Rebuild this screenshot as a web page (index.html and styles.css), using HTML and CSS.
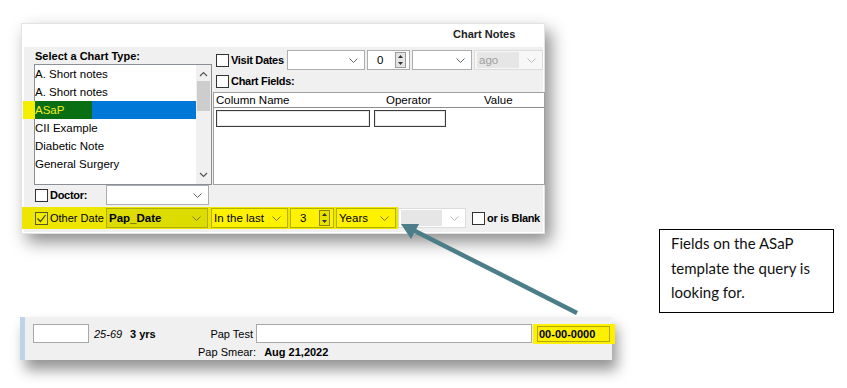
FILE: index.html
```html
<!DOCTYPE html>
<html lang="en">
<head>
  <meta charset="UTF-8" />
  <title>Chart Notes query</title>
  <link rel="stylesheet" href="styles.css">
</head>
<body>
  <div class="page">
    <div class="panel">
      <div class="panel-head">Chart Notes</div>
      <div class="panel-body">
        <div class="left-col">
          <div class="section-label">Select a Chart Type:</div>
          <div class="listbox">
            <ul class="list-items">
              <li>A. Short notes</li>
              <li>A. Short notes</li>
              <li class="selected"><span class="mark">ASaP</span></li>
              <li>CII Example</li>
              <li>Diabetic Note</li>
              <li>General Surgery</li>
            </ul>
            <div class="vscroll">
              <svg width="9" height="6" viewBox="0 0 9 6"><path d="M1 5 L4.5 1.5 L8 5" fill="none" stroke="#555" stroke-width="1.2"/></svg>
              <div class="thumb"></div>
              <svg class="down" width="9" height="6" viewBox="0 0 9 6"><path d="M1 1 L4.5 4.5 L8 1" fill="none" stroke="#555" stroke-width="1.2"/></svg>
            </div>
          </div>
        </div>

        <div class="right-col">
          <div class="visit-row">
            <span class="check"></span>
            <span class="bold-label visit-label">Visit Dates</span>
            <div class="combo w78">
              <span class="combo-text"></span>
              <svg width="9" height="5" viewBox="0 0 9 5"><path d="M0.5 0.5 L4.5 4.5 L8.5 0.5" fill="none" stroke="#666"/></svg>
            </div>
            <div class="spin w43">
              <span class="spin-text">0</span>
              <span class="spin-btns">
                <span class="spin-btn"><svg width="5" height="3" viewBox="0 0 5 3"><path d="M0 3 L2.5 0 L5 3 Z" fill="#333"/></svg></span>
                <span class="spin-btn"><svg width="5" height="3" viewBox="0 0 5 3"><path d="M0 0 L2.5 3 L5 0 Z" fill="#333"/></svg></span>
              </span>
            </div>
            <div class="combo w60">
              <span class="combo-text"></span>
              <svg width="9" height="5" viewBox="0 0 9 5"><path d="M0.5 0.5 L4.5 4.5 L8.5 0.5" fill="none" stroke="#666"/></svg>
            </div>
            <div class="combo disabled w69">
              <span class="combo-text field">ago</span>
              <svg width="9" height="5" viewBox="0 0 9 5"><path d="M0.5 0.5 L4.5 4.5 L8.5 0.5" fill="none" stroke="#bbb"/></svg>
            </div>
          </div>

          <div class="fields-row">
            <span class="check"></span>
            <span class="bold-label">Chart Fields:</span>
          </div>

          <div class="field-grid">
            <div class="grid-head">
              <span class="col-name">Column Name</span>
              <span class="col-op">Operator</span>
              <span class="col-val">Value</span>
            </div>
            <div class="grid-row">
              <span class="cell-input w154"></span>
              <span class="cell-input w72"></span>
            </div>
          </div>
        </div>

        <div class="doctor-row">
          <span class="check"></span>
          <span class="bold-label doctor-label">Doctor:</span>
          <div class="combo w103 white">
            <span class="combo-text"></span>
            <svg width="9" height="5" viewBox="0 0 9 5"><path d="M0.5 0.5 L4.5 4.5 L8.5 0.5" fill="none" stroke="#666"/></svg>
          </div>
        </div>

        <div class="other-row">
          <div class="highlight">
            <span class="check checked">
              <svg width="11" height="11" viewBox="0 0 11 11"><path d="M1.5 5.5 L4.5 8.5 L9.5 2" fill="none" stroke="#3a3a00" stroke-width="1.2"/></svg>
            </span>
            <span class="other-label">Other Date</span>
            <div class="combo w102 hl-dark">
              <span class="combo-text strong">Pap_Date</span>
              <svg width="9" height="5" viewBox="0 0 9 5"><path d="M0.5 0.5 L4.5 4.5 L8.5 0.5" fill="none" stroke="#777700"/></svg>
            </div>
            <div class="combo w77 hl">
              <span class="combo-text">In the last</span>
              <svg width="9" height="5" viewBox="0 0 9 5"><path d="M0.5 0.5 L4.5 4.5 L8.5 0.5" fill="none" stroke="#777700"/></svg>
            </div>
            <div class="spin w44 hl">
              <span class="spin-text">3</span>
              <span class="spin-btns">
                <span class="spin-btn"><svg width="5" height="3" viewBox="0 0 5 3"><path d="M0 3 L2.5 0 L5 3 Z" fill="#333"/></svg></span>
                <span class="spin-btn"><svg width="5" height="3" viewBox="0 0 5 3"><path d="M0 0 L2.5 3 L5 0 Z" fill="#333"/></svg></span>
              </span>
            </div>
            <div class="combo w60 hl">
              <span class="combo-text">Years</span>
              <svg width="9" height="5" viewBox="0 0 9 5"><path d="M0.5 0.5 L4.5 4.5 L8.5 0.5" fill="none" stroke="#777700"/></svg>
            </div>
          </div>
          <div class="combo disabled w68 white blank-combo">
            <span class="combo-text field"></span>
            <svg width="9" height="5" viewBox="0 0 9 5"><path d="M0.5 0.5 L4.5 4.5 L8.5 0.5" fill="none" stroke="#bbb"/></svg>
          </div>
          <span class="check blank-check"></span>
          <span class="bold-label">or is Blank</span>
        </div>
      </div>
    </div>

    <div class="strip">
      <div class="strip-bar"></div>
      <div class="strip-body">
        <div class="strip-row">
          <span class="text-box w56"></span>
          <span class="age">25-69</span>
          <span class="freq">3 yrs</span>
          <span class="test-label">Pap Test</span>
          <span class="text-box w276"></span>
          <span class="date-mark"><span class="date-box">00-00-0000</span></span>
        </div>
        <div class="strip-row2">
          <span class="smear-label">Pap Smear:</span>
          <span class="smear-date">Aug 21,2022</span>
        </div>
      </div>
    </div>
  </div>

  <svg class="arrow" width="847" height="388" viewBox="0 0 847 388">
    <line x1="577" y1="313" x2="413" y2="230" stroke="#4b7e88" stroke-width="4.5"/>
    <polygon points="401,224 419,224 411,239" fill="#4b7e88"/>
  </svg>

  <div class="callout">Fields on the ASaP template the query is looking for.</div>
</body>
</html>
```

FILE: styles.css
```css
body {
  margin: 0;
  width: 847px;
  height: 388px;
  overflow: hidden;
  position: relative;
  background: #ffffff;
  font-family: 'Liberation Sans', Arial, sans-serif;
  font-size: 11.5px;
  color: #000;
}

.page {
  padding: 23px 0 0 21px;
}

/* top screenshot */
.panel {
  width: 524px;
  height: 211px;
  box-sizing: border-box;
  background: #fff;
  border: 1px solid #e3e3e3;
  box-shadow: 6px 8px 16px rgba(0, 0, 0, 0.45);
  padding: 0 1px 1px 2px;
  display: flex;
  flex-direction: column;
}

.panel-head {
  height: 23px;
  line-height: 20px;
  padding-left: 429px;
  font-weight: bold;
  font-size: 11px;
  color: #222;
}

.panel-body {
  flex: 1;
  background: #f0f0f0;
  padding-left: 10px;
  display: grid;
  grid-template-columns: 179px 1fr;
  align-content: start;
}

.section-label {
  height: 15px;
  padding: 2px 0 0 1px;
  font-weight: bold;
  font-size: 11px;
  line-height: 15px;
}

.listbox {
  width: 178px;
  height: 121px;
  box-sizing: border-box;
  border: 1px solid #8a8f96;
  background: #fff;
  display: flex;
}

.list-items {
  list-style: none;
  margin: 0;
  padding: 0;
  flex: 1;
}

.list-items li {
  height: 18px;
  line-height: 18px;
  white-space: nowrap;
}

.list-items li.selected {
  background: #0078d7;
}

.mark {
  display: inline-block;
  height: 18px;
  width: 69px;
  margin-left: -12px;
  padding-left: 12px;
  box-sizing: border-box;
  background: linear-gradient(to right, #f4ee00 0 12px, #0a6e12 12px);
  color: #f0ee20;
}

.vscroll {
  width: 15px;
  background: #f0f0f0;
  display: flex;
  flex-direction: column;
  align-items: center;
  padding-top: 6px;
}

.vscroll .thumb {
  width: 13px;
  height: 30px;
  margin-top: 4px;
  background: #cdcdcd;
}

.vscroll .down {
  margin-top: auto;
  margin-bottom: 6px;
}

.visit-row {
  margin-top: 3px;
  height: 20px;
  display: flex;
  align-items: center;
}

.check {
  width: 11px;
  height: 11px;
  border: 1px solid #333;
  background: #fff;
  display: inline-flex;
  align-items: center;
  justify-content: center;
  flex-shrink: 0;
}

.visit-row .check,
.fields-row .check {
  margin-left: 3px;
}

.bold-label {
  font-weight: bold;
  font-size: 11px;
  letter-spacing: -0.3px;
  margin-left: 2px;
  white-space: nowrap;
}

.visit-label {
  width: 56px;
}

.combo {
  height: 20px;
  box-sizing: border-box;
  border: 1px solid #adadad;
  background: #fff;
  display: flex;
  align-items: center;
  padding: 0 6px 0 2px;
  margin-right: 2px;
}

.combo .combo-text {
  flex: 1;
  white-space: nowrap;
  overflow: hidden;
}

.combo .combo-text.strong {
  font-weight: bold;
}

.combo.disabled {
  background: #f7f7f7;
  border-color: #dcdcdc;
  color: #a0a0a0;
}

.combo.disabled .field {
  background: #e6e6e6;
  height: 16px;
  line-height: 16px;
  margin-right: 8px;
  padding-left: 2px;
}

.combo.white { background: #fff; }

.w43 { width: 43px; }
.w44 { width: 44px; }
.w60 { width: 60px; }
.w68 { width: 68px; }
.w69 { width: 69px; }
.w77 { width: 77px; }
.w78 { width: 78px; }
.w102 { width: 102px; }
.w103 { width: 103px; }

.spin {
  height: 20px;
  box-sizing: border-box;
  border: 1px solid #adadad;
  background: #fff;
  display: flex;
  align-items: center;
  margin-right: 2px;
}

.spin-text {
  flex: 1;
  padding-left: 9px;
}

.spin-btns {
  display: flex;
  flex-direction: column;
  margin-right: 3px;
  border: 1px solid #9a9a9a;
}

.spin-btn {
  width: 9px;
  height: 7px;
  display: flex;
  align-items: center;
  justify-content: center;
  background: #e5e5e5;
}

.fields-row {
  margin-top: 2px;
  height: 18px;
  display: flex;
  align-items: center;
}

.field-grid {
  margin-top: 2px;
  height: 93px;
  width: 332px;
  box-sizing: border-box;
  border: 1px solid #a0a0a0;
  background: #fff;
}

.grid-head {
  height: 14px;
  border-bottom: 1px solid #8c8c8c;
  display: flex;
  align-items: center;
  padding-left: 2px;
}

.col-name { width: 170px; }
.col-op { width: 98px; }

.grid-row {
  display: flex;
  padding: 2px 0 0 2px;
  gap: 4px;
}

.cell-input {
  height: 17px;
  box-sizing: border-box;
  border: 1px solid #3c3c3c;
  background: #fff;
  box-shadow: inset 0 0 0 1px #e8e8e8;
}

.w154 { width: 154px; }
.w72 { width: 72px; }

.doctor-row {
  grid-column: 1 / -1;
  height: 20px;
  display: flex;
  align-items: center;
}

.doctor-row .check { margin-left: 1px; }

.doctor-label { width: 56px; }

.other-row {
  grid-column: 1 / -1;
  margin-top: 2px;
  height: 22px;
  display: flex;
  align-items: center;
}

.highlight {
  height: 22px;
  margin-left: -12px;
  padding-left: 13px;
  background: #ede600;
  display: flex;
  align-items: center;
}

.check.checked {
  background: #f2ec00;
  border-color: #5a5a20;
}

.other-label {
  width: 56px;
  margin-left: 2px;
  font-size: 11px;
}

.combo.hl,
.spin.hl {
  background: #fff200;
  border-color: #b5b000;
}

.spin.hl .spin-btn { background: #e8e000; }
.spin.hl .spin-btns { border-color: #8a8600; }

.combo.hl-dark {
  background: #dcdc00;
  border-color: #b0ac00;
  margin-right: 3px;
}

.blank-combo {
  margin-right: 0;
}

.blank-check {
  margin-left: 6px;
}

/* bottom screenshot */
.strip {
  width: 592px;
  height: 43px;
  margin: 83px 0 0 -1px;
  display: flex;
  background: #f0f0f0;
  box-shadow: 5px 10px 14px rgba(0, 0, 0, 0.42);
  font-size: 11px;
}

.strip-bar {
  width: 5px;
  flex-shrink: 0;
  background: #bcd3ea;
}

.strip-body {
  flex: 1;
  min-width: 0;
  padding-top: 7px;
}

.strip-row {
  display: flex;
  align-items: center;
  height: 19px;
}

.strip-row > span {
  flex-shrink: 0;
}

.text-box {
  height: 19px;
  box-sizing: border-box;
  border: 1px solid #a8a8a8;
  background: #fff;
}

.w56 { width: 56px; margin-left: 8px; }
.w276 { width: 276px; }

.age {
  font-style: italic;
  margin-left: 5px;
  width: 36px;
}

.freq {
  font-weight: bold;
  width: 40px;
}

.test-label {
  width: 83px;
  text-align: right;
  margin-right: 3px;
}

.date-mark {
  margin-left: 1px;
  width: 82px;
  height: 20px;
  background: #fff000;
  display: flex;
  align-items: center;
  padding-left: 4px;
  box-sizing: border-box;
}

.date-box {
  width: 73px;
  height: 16px;
  box-sizing: border-box;
  border: 1px solid #b0a800;
  font-weight: bold;
  line-height: 14px;
  padding-left: 1px;
}

.strip-row2 {
  padding: 2px 0 0 173px;
  height: 14px;
  line-height: 14px;
}

.smear-date {
  font-weight: bold;
  margin-left: 5px;
}

/* annotations */
.arrow {
  position: absolute;
  left: 0;
  top: 0;
  pointer-events: none;
}

.callout {
  position: absolute;
  left: 659px;
  top: 229px;
  width: 175px;
  height: 84px;
  box-sizing: border-box;
  border: 1px solid #000;
  background: #fff;
  padding: 1px 8px 0 11px;
  font-family: Lato, 'Noto Sans', sans-serif;
  font-size: 15px;
  line-height: 24.5px;
  color: #111;
}
```
